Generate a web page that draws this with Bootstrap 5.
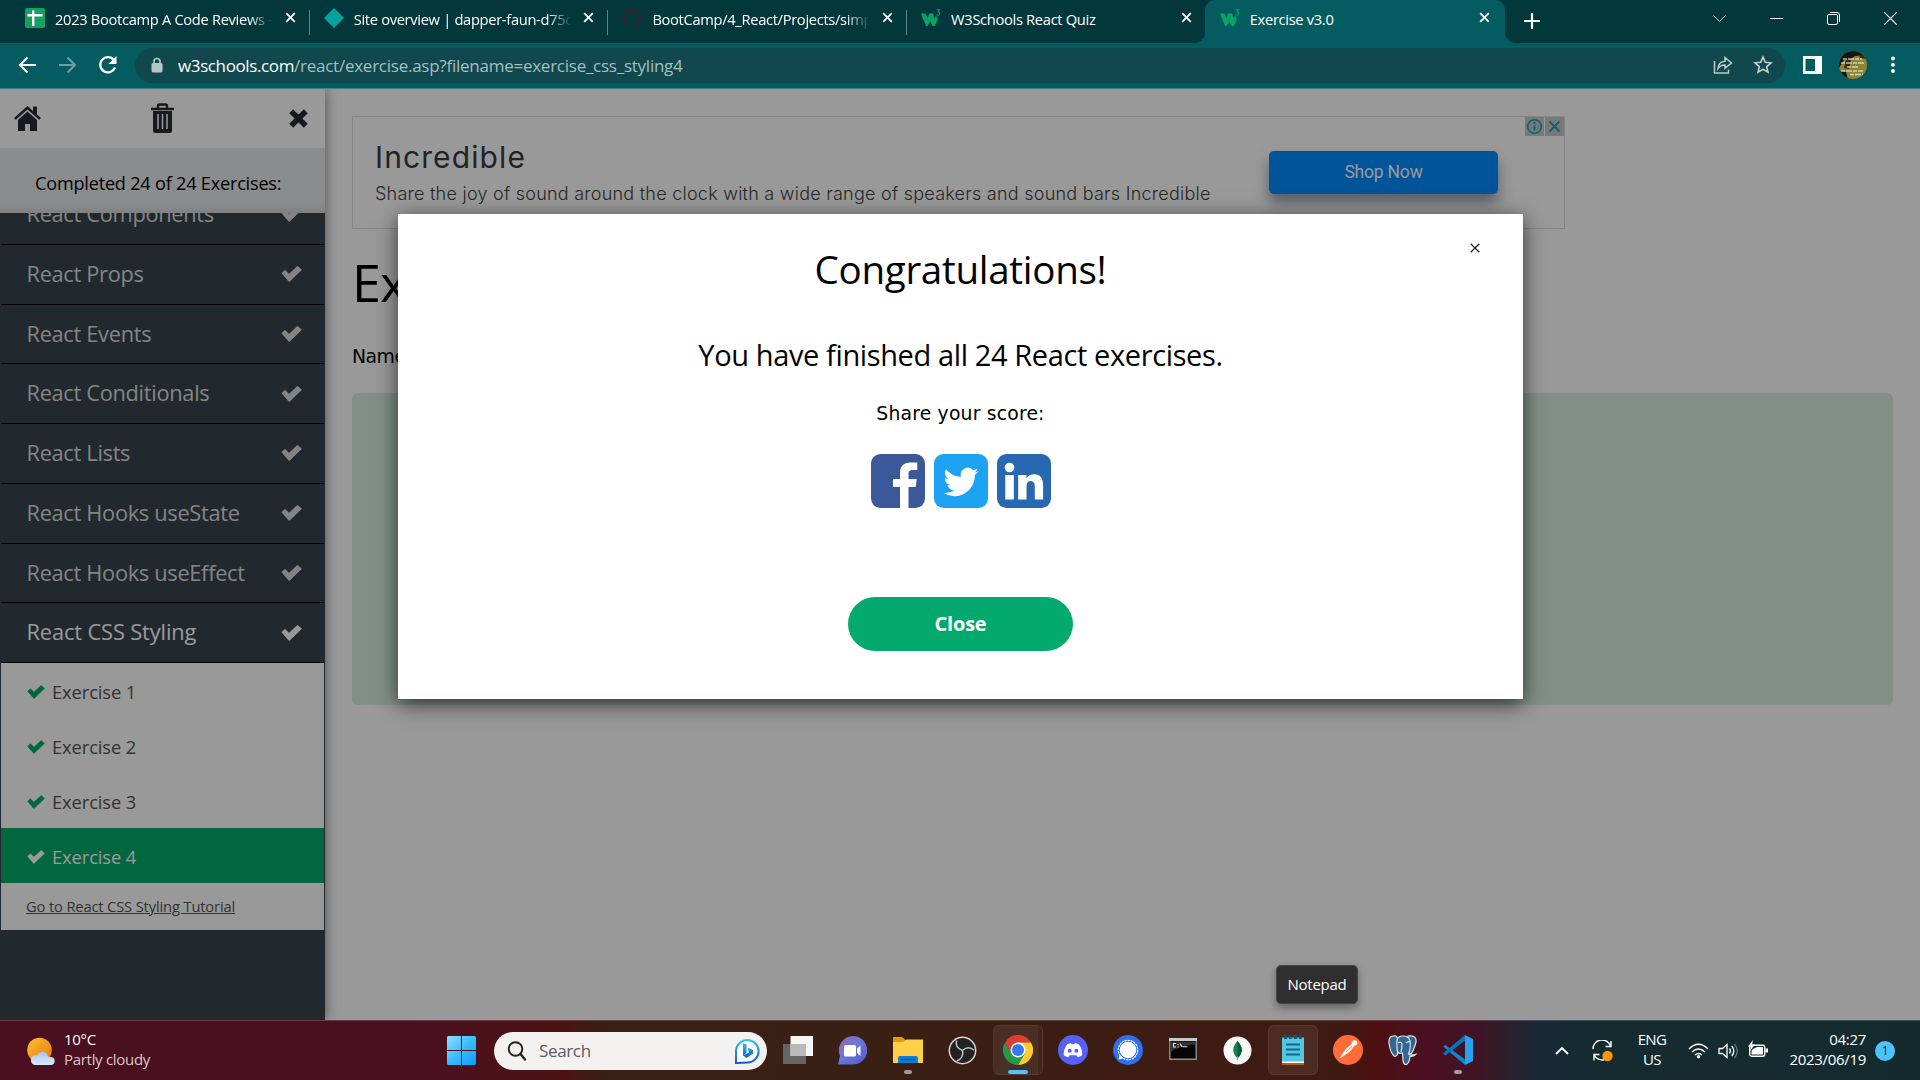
<!DOCTYPE html>
<html lang="en">
<head>
<meta charset="utf-8">
<meta name="viewport" content="width=device-width, initial-scale=1">
<title>Exercise v3.0</title>
<link href="https://cdn.jsdelivr.net/npm/bootstrap@5.3.0/dist/css/bootstrap.min.css" rel="stylesheet">
<style>
body{width:1920px;height:1080px;overflow:hidden;font-family:"Open Sans","Noto Sans",sans-serif;color:#000}
svg{display:block;flex:none}
/* browser tabs */
.tabstrip{height:43px;background:#02383c;color:#fff;font-size:14.700px}
.tab-item{width:298.7px;padding:0 13px 8px 15px;position:relative}
.tab-item+.tab-item:not(.is-active)::before{content:"";position:absolute;left:0;top:10px;height:25px;width:1px;background:#5f8386}
.tab-label{width:220px;margin-left:10px;overflow:hidden;white-space:nowrap;letter-spacing:-.32px;line-height:24px;padding-top:2px}
.tab-fade{-webkit-mask-image:linear-gradient(90deg,#000 88%,transparent 99%);mask-image:linear-gradient(90deg,#000 88%,transparent 99%)}
.is-active{background:#055c60;border-radius:10px 10px 0 0;width:300px;padding-right:15px}
.is-active::before,.is-active::after{content:"";position:absolute;bottom:0;width:10px;height:10px}
.is-active::before{left:-10px;background:radial-gradient(circle at 0 0,transparent 9.5px,#055c60 10px)}
.is-active::after{right:-10px;background:radial-gradient(circle at 100% 0,transparent 9.5px,#055c60 10px)}
.win-buttons{padding-right:23px;padding-bottom:6px}
/* toolbar */
.toolbar{height:46px;background:#055c60;border-bottom:1px solid #3e8083;padding:0 23px 1px 17px}
.omnibox{height:35px;background:#10484d;border-radius:18px;margin-left:18px;padding:0 12px 0 15px;font-size:17px;color:#a5bfc1}
.url{letter-spacing:-.25px;margin-left:14px;line-height:24px;padding-top:1px}
.url b{font-weight:400;color:#fff;letter-spacing:-.38px}
/* page */
.page{height:931px;position:relative;overflow:hidden}
.sidebar{width:325px;background:#38444e;box-shadow:0 0 12px rgba(0,0,0,.5);z-index:1}
.side-tools{height:59px;background:#fff;color:#282a35;padding:0 16px 1px 14px}
.side-status{height:65px;background:#e7e9eb;font-size:18.1px;letter-spacing:-.2px;padding:21px 0 0 35px;line-height:29px;box-shadow:inset 0 -12px 10px -10px rgba(0,0,0,.13);white-space:nowrap}
.side-list{margin:0 1px;overflow:hidden;flex:1}
.topic{height:59.75px;border-bottom:1px solid #000;color:#ddd;font-size:21.8px;letter-spacing:-.31px;padding:1px 22px 1px 25.500px}
.topic.first-cut{margin-top:-28px}
.topic.opened{color:#fff;letter-spacing:-.12px}
.exer{height:55px;background:#fff;color:#555;font-size:18.3px;letter-spacing:-.08px;padding:2px 0 0 26px;gap:7px}
.exer svg{color:#04aa6d}
.exer.done-now{background:#04aa6d;color:#fff}
.exer.done-now svg{color:#fff}
.tut{height:47px;background:#fff;padding:11px 0 0 25px;font-size:14.700px;letter-spacing:-.14px;line-height:24px}
.tut a{color:#555}
.content-area{padding:27px 27px 0}
.ad-box{width:1213px;height:113px;border:1px solid #dedede;padding-left:22px;position:relative}
.ad-title{font:400 30px/36px Inter,sans-serif;letter-spacing:1.1px;color:#3a3b40;margin-bottom:7px}
.ad-sub{font:300 18px/24px Inter,sans-serif;letter-spacing:.245px;color:#444}
.ad-btn{width:229px;height:43px;margin:0 66px 0 0;background:#008cff;color:#fff;border-radius:5px;font:400 17.5px/42px Roboto,sans-serif;box-shadow:0 9px 14px rgba(40,60,90,.5);letter-spacing:-.2px}
.ad-choices{position:absolute;right:0;top:0;gap:1px}
.ad-choices span{width:19px;height:19px;background:#c8c8c8;display:grid;place-items:center}
.ex-title{font-size:52px;font-weight:400;line-height:60px;margin:23px 0 0;letter-spacing:-1px}
.ex-text{font:18.75px/28px "DejaVu Sans",sans-serif;margin:31px 0 22px;letter-spacing:-.45px}
.answer{height:312px;background:#d9eee1;border-radius:6px}
.dim{position:absolute;inset:0;background:rgba(0,0,0,.4);z-index:5;padding:125px 397px 0 398px}
.dialog-box{height:485px;background:#fff;box-shadow:0 5px 20px rgba(0,0,0,.65);position:relative}
.dialog-x{position:absolute;right:43px;top:29px}
.dlg-h{font-size:38.600px;font-weight:400;letter-spacing:-.3px;line-height:54px;margin:0;padding-top:28px}
.dlg-p{font-size:29px;font-weight:400;letter-spacing:-.38px;line-height:40px;margin:39px 0 0}
.dlg-s{font:18.75px/26px "DejaVu Sans",sans-serif;letter-spacing:.2px;margin:26px 0 0}
.share-row{gap:9px;margin-top:27px}
.dlg-close{width:225px;height:54px;margin-top:89px;border-radius:27px;background:#04aa6d;color:#fff;font-size:20px;font-weight:700;letter-spacing:-.2px;line-height:50px;padding:0;border:0}
.dlg-close:hover{background:#04aa6d;color:#fff}
.hint{position:absolute;left:1276px;top:876px;width:82px;height:39px;background:#2f2f2f;border:1px solid #454545;border-radius:5px;color:#fff;font-size:15px;line-height:36px;z-index:6;box-shadow:0 4px 8px rgba(0,0,0,.35);letter-spacing:-.25px}
/* taskbar */
.taskbar{height:60px;border-top:1px solid rgba(255,255,255,.17);color:#fff;font-size:15px;line-height:20px;letter-spacing:-.3px;background:linear-gradient(90deg,#4a1020 0,#4a1020 420px,#4d1213 560px,#3a2016 605px,#3a1f14 900px,#3f1a12 1340px,#4c1011 1375px,#4a1023 1430px,#3d1524 1480px,#182a38 1540px,#152b30 1600px,#142b2e 1920px)}
.two-line{padding-bottom:4px}
.weather{width:447px;padding-left:27px;gap:9px}
.weather .sky{color:#dcc5ca}
.seek{width:273px;height:38px;border-radius:19px;background:#f4f2f0;margin-left:18px;padding:0 7px 0 13px;color:#5c5c5c;font-size:17px;letter-spacing:-.35px}
.tk{width:55px;height:60px;position:relative;display:grid;place-items:center;padding-bottom:1px}
.tk.run::after{content:"";position:absolute;bottom:7px;width:8px;height:4px;border-radius:2px;background:#a39a97}
.tk.cur::after{width:20px;background:#4cc2ff}
.tk.cur::before,.tk.hov::before{content:"";position:absolute;left:5px;top:4px;width:45px;height:50px;border-radius:6px;background:rgba(255,255,255,.07);border:1px solid rgba(255,255,255,.07)}
.tk.cur::before{left:3px;width:50px;background:linear-gradient(90deg,rgba(255,255,255,.08) 43px,rgba(255,255,255,.15) 43px,rgba(255,255,255,.03) 44px)}
.tk.hov::before{left:3px;width:50px}
.tk svg{position:relative}
.note-count{width:20px;height:20px;border-radius:50%;background:#4cc2ff;color:#10222c;font-size:12px;line-height:19px;margin:0 25px 0 9px}
</style>
</head>
<body class="d-flex flex-column">

<svg width="0" height="0" class="position-absolute">
  <symbol id="tick" viewBox="0 0 21 16"><path d="M1.2 7.2 4 4.6 8 8.6 16.5 .8 20 3.7 8.1 15.2z" fill="currentColor" stroke="currentColor" stroke-width="1.2" stroke-linejoin="round"/></symbol>
  <symbol id="cross" viewBox="0 0 12 12"><path d="M1.3 1.3 10.7 10.7M10.7 1.3 1.3 10.7" stroke="currentColor" stroke-width="1.9"/></symbol>
  <symbol id="w3" viewBox="0 0 20 20"><path d="M0 5.500h4.500l2 5 1.800-5h3.700l1.500 5 1.700-3 1.600 4-3 6.500h-2.300l-2.200-5-2.500 5H5z" fill="#04a567"/><path d="M15.800 1.800h2.700l-1.400 2c2.500.2 1.800 3.700-.2 3.400-.6 0-1-.3-1.300-.7" fill="none" stroke="#04a567" stroke-width="1.100"/></symbol>
</svg>

<div class="tabstrip d-flex">
  <div class="d-flex" style="padding-left:10px">
    <div class="tab-item d-flex align-items-center">
      <svg width="20" height="20"><rect width="20" height="20" rx="2" fill="#13a162"/><path d="M8.200 2.500v15.500M2.500 7.200h15" stroke="#fff" stroke-width="2.400"/></svg>
      <span class="tab-label tab-fade">2023 Bootcamp A Code Reviews -</span>
      <svg class="ms-auto" width="11" height="11"><use href="#cross"/></svg>
    </div>
    <div class="tab-item d-flex align-items-center">
      <svg width="20" height="20"><path d="M10 0 20 10 10 20 0 10z" fill="#04a39e"/></svg>
      <span class="tab-label tab-fade">Site overview | dapper-faun-d75c</span>
      <svg class="ms-auto" width="11" height="11"><use href="#cross"/></svg>
    </div>
    <div class="tab-item d-flex align-items-center">
      <svg width="20" height="20" viewBox="0 0 16 16"><path fill="#24292f" d="M8 0C3.580 0 0 3.580 0 8c0 3.540 2.290 6.530 5.470 7.590.4.070.55-.17.55-.38v-1.490c-2.010.37-2.530-.49-2.690-.94-.09-.23-.48-.94-.82-1.130-.28-.15-.68-.52-.01-.53.63-.01 1.080.58 1.230.82.720 1.210 1.870.87 2.330.66.070-.52.280-.87.510-1.070-1.780-.2-3.640-.89-3.640-3.950 0-.87.31-1.590.82-2.150-.08-.2-.36-1.020.08-2.120 0 0 .67-.21 2.200.82a7.600 7.600 0 0 1 4 0c1.530-1.040 2.200-.82 2.200-.82.440 1.100.160 1.920.080 2.120.510.560.820 1.270.820 2.150 0 3.070-1.870 3.750-3.650 3.950.290.250.540.730.540 1.480v2.200c0 .210.150.460.550.380A8 8 0 0 0 16 8c0-4.420-3.580-8-8-8"/></svg>
      <span class="tab-label tab-fade">BootCamp/4_React/Projects/simp</span>
      <svg class="ms-auto" width="11" height="11"><use href="#cross"/></svg>
    </div>
    <div class="tab-item d-flex align-items-center">
      <svg width="20" height="20"><use href="#w3"/></svg>
      <span class="tab-label">W3Schools React Quiz</span>
      <svg class="ms-auto" width="11" height="11"><use href="#cross"/></svg>
    </div>
    <div class="tab-item is-active d-flex align-items-center">
      <svg width="20" height="20"><use href="#w3"/></svg>
      <span class="tab-label">Exercise v3.0</span>
      <svg class="ms-auto" width="11" height="11"><use href="#cross"/></svg>
    </div>
  </div>
  <svg class="ms-3 mt-1 align-self-start" width="24" height="34"><path d="M3 17h16M11 9v16" stroke="#fff" stroke-width="2.200"/></svg>
  <div class="win-buttons d-flex align-items-center ms-auto" style="gap:44px">
    <svg width="13" height="13"><path d="M.5 3.500 6.500 9.500 12.500 3.500" fill="none" stroke="#c5d3d4"/></svg>
    <svg width="13" height="13"><path d="M0 6.500h13" stroke="#fff"/></svg>
    <svg width="13" height="13"><rect x=".5" y="2.500" width="10" height="10" rx="1.500" fill="none" stroke="#fff"/><path d="M3 .5h7q2.500 0 2.500 2.500v7" fill="none" stroke="#fff"/></svg>
    <svg width="13" height="13"><path d="M.3.3 12.700 12.700M12.700.3.3 12.700" stroke="#fff" stroke-width="1.100"/></svg>
  </div>
</div>

<div class="toolbar d-flex align-items-center">
  <svg width="20" height="20"><path d="M19 10H3.500M10.500 2.500 3 10l7.500 7.500" fill="none" stroke="#fff" stroke-width="2"/></svg>
  <svg style="margin-left:21px" width="20" height="20"><path d="M1 10h15.500M9.500 2.500 17 10l-7.500 7.500" fill="none" stroke="#6d9fa2" stroke-width="2"/></svg>
  <svg style="margin-left:20px" width="19" height="20"><path d="M15.800 5A7.600 7.600 0 1 0 17 12.500" fill="none" stroke="#fff" stroke-width="2.200"/><path d="M18.500 1v8h-8z" fill="#fff"/></svg>
  <div class="omnibox d-flex align-items-center flex-grow-1">
    <svg width="14" height="17" viewBox="0 0 14 17"><path d="M4 7V4.500a3 3 0 0 1 6 0V7" fill="none" stroke="#b6c5c7" stroke-width="1.700"/><rect x="1.500" y="6" width="11" height="9.500" rx="1.500" fill="#b6c5c7"/></svg>
    <span class="url"><b>w3schools.com</b>/react/exercise.asp?filename=exercise_css_styling4</span>
    <svg class="ms-auto" width="20" height="18" fill="none" stroke="#b9c8ca" stroke-width="1.500"><path d="M1.500 5v12h14v-3.500M5 12.500C5.300 8 7.500 5.500 12 5.200V1.500L18.500 7 12 12.200V9C9 8.800 6.700 10 5 12.500z"/></svg>
    <svg style="margin-left:20px" width="20" height="20"><path d="M10 2l2.300 5.300 5.700.5-4.300 3.800 1.300 5.600-5-3-5 3 1.300-5.600L2 7.800l5.700-.5z" fill="none" stroke="#c3cfd0" stroke-width="1.600"/></svg>
  </div>
  <svg style="margin-left:18px" width="19" height="18"><path d="M0 0h19v18H0zM2.500 3v12H12V3z" fill="#fff" fill-rule="evenodd"/></svg>
  <svg style="margin-left:17px" width="28" height="28"><defs><clipPath id="av"><circle cx="14" cy="14" r="14"/></clipPath></defs><g clip-path="url(#av)"><path fill="#8f8434" d="M0 0h28v28H0z"/><path d="M0 0h28v4l-12 1-4 3-7 1-5 8zM0 20l7 1 2 7H0z" fill="#15160f"/><path d="M20 4l8-1v5l-7-1zM7 8l5 1-2 9-5-1z" fill="#3b2a18"/><path d="M4 8h19M2 12h23M8 16h12M2 20h22M11 23.500h13" stroke="#e6ebdf" stroke-width="1.400" stroke-dasharray="4 1 6 1" opacity=".75"/></g></svg>
  <svg style="margin-left:22px" width="8" height="20" fill="#fff"><circle cx="4" cy="3.500" r="2"/><circle cx="4" cy="9.800" r="2"/><circle cx="4" cy="16" r="2"/></svg>
</div>

<div class="page d-flex">
  <aside class="sidebar d-flex flex-column">
    <div class="side-tools d-flex align-items-center justify-content-between">
      <svg width="27" height="27" viewBox="0 0 27 27" fill="currentColor"><path d="M13.500 1 0 13l1.800 1.800L13.500 4.500l11.700 10.300L27 13l-4-3.600V1.500h-4v4.400z"/><path d="M13.500 6.500 4 15v11h7v-7h5v7h7V15z"/></svg>
      <svg width="23" height="31" viewBox="0 0 23 31" style="margin-right:4px"><path d="M7 5.500V3q0-1.500 1.500-1.500h6Q16 1.500 16 3v2.500M0 6h23" stroke="currentColor" stroke-width="2.400" fill="none"/><path d="M2 8h19v19.500q0 2.500-2.500 2.500h-14Q2 30 2 27.500z" fill="currentColor"/><path d="M7 11v15M11.500 11v15M16 11v15" stroke="#fff" stroke-width="1.500"/></svg>
      <svg width="21" height="21"><path d="M3.200 3.200 17.800 17.800M17.800 3.200 3.200 17.800" stroke="currentColor" stroke-width="5.500" stroke-linejoin="round"/></svg>
    </div>
    <div class="side-status">Completed 24 of 24 Exercises:</div>
    <div class="side-list">
      <div class="topic first-cut d-flex align-items-center justify-content-between">React Components<svg width="21" height="16"><use href="#tick"/></svg></div>
      <div class="topic d-flex align-items-center justify-content-between">React Props<svg width="21" height="16"><use href="#tick"/></svg></div>
      <div class="topic d-flex align-items-center justify-content-between">React Events<svg width="21" height="16"><use href="#tick"/></svg></div>
      <div class="topic d-flex align-items-center justify-content-between">React Conditionals<svg width="21" height="16"><use href="#tick"/></svg></div>
      <div class="topic d-flex align-items-center justify-content-between">React Lists<svg width="21" height="16"><use href="#tick"/></svg></div>
      <div class="topic d-flex align-items-center justify-content-between">React Hooks useState<svg width="21" height="16"><use href="#tick"/></svg></div>
      <div class="topic d-flex align-items-center justify-content-between">React Hooks useEffect<svg width="21" height="16"><use href="#tick"/></svg></div>
      <div class="topic opened d-flex align-items-center justify-content-between">React CSS Styling<svg width="21" height="16"><use href="#tick"/></svg></div>
      <div class="exer d-flex align-items-center"><svg width="18" height="14"><use href="#tick"/></svg>Exercise 1</div>
      <div class="exer d-flex align-items-center"><svg width="18" height="14"><use href="#tick"/></svg>Exercise 2</div>
      <div class="exer d-flex align-items-center"><svg width="18" height="14"><use href="#tick"/></svg>Exercise 3</div>
      <div class="exer done-now d-flex align-items-center"><svg width="18" height="14"><use href="#tick"/></svg>Exercise 4</div>
      <div class="tut"><a href="#">Go to React CSS Styling Tutorial</a></div>
    </div>
  </aside>

  <main class="content-area flex-grow-1">
    <div class="ad-box d-flex justify-content-between align-items-center">
      <div>
        <div class="ad-title">Incredible</div>
        <div class="ad-sub text-nowrap">Share the joy of sound around the clock with a wide range of speakers and sound bars Incredible</div>
      </div>
      <div class="ad-btn text-center">Shop Now</div>
      <div class="ad-choices d-flex">
        <span><svg width="17" height="17"><circle cx="8.500" cy="8.500" r="6.800" fill="none" stroke="#00aecd" stroke-width="1.600"/><path d="M8.500 7.500v5M8.500 4v2" stroke="#00aecd" stroke-width="2"/></svg></span>
        <span><svg width="13" height="13"><path d="M1.500 1.500 11.500 11.500M11.500 1.500 1.500 11.500" stroke="#00aecd" stroke-width="1.900"/></svg></span>
      </div>
    </div>
    <h1 class="ex-title">Exercise:</h1>
    <p class="ex-text">Name</p>
    <div class="answer"></div>
  </main>

  <div class="dim">
    <div class="dialog-box text-center">
      <svg class="dialog-x" width="10" height="10"><path d="M.7.700 9.300 9.300M9.300.700.700 9.300" stroke="#222" stroke-width="1.300"/></svg>
      <h2 class="dlg-h">Congratulations!</h2>
      <p class="dlg-p">You have finished all 24 React exercises.</p>
      <p class="dlg-s">Share your score:</p>
      <div class="share-row d-flex justify-content-center">
        <svg width="54" height="54"><rect width="54" height="54" rx="9.500" fill="#3b5998"/><path d="M29 54V33h-7v-8h7v-6c0-7 4-10.500 10-10.500h7.300V16H42c-3.500 0-4.500 1.300-4.500 4v5h8.200l-1 8h-7.200v21z" fill="#fff"/></svg>
        <svg width="54" height="54"><rect width="54" height="54" rx="9.500" fill="#1da1f2"/><path transform="translate(9.500 10.500) scale(1.460)" d="M24 4.600a9.800 9.800 0 0 1-2.800.8 4.900 4.900 0 0 0 2.200-2.700 9.900 9.900 0 0 1-3.100 1.200 4.900 4.900 0 0 0-8.400 4.500A14 14 0 0 1 1.700 3.200a4.900 4.900 0 0 0 1.500 6.600 4.900 4.900 0 0 1-2.200-.6 4.900 4.900 0 0 0 3.900 4.900 5 5 0 0 1-2.200.1 4.900 4.900 0 0 0 4.600 3.400A9.900 9.900 0 0 1 0 19.500a14 14 0 0 0 21.500-12.400A10 10 0 0 0 24 4.600z" fill="#fff"/></svg>
        <svg width="54" height="54"><rect width="54" height="54" rx="9.500" fill="#2867b2"/><g fill="#fff"><circle cx="12.500" cy="13.500" r="4.800"/><path d="M8.300 21h8.500v24.500H8.300zM21.200 21h8.200v3.200c1.800-2.500 4.400-4 8-4 6 0 8.700 4.300 8.700 10.500v14.800h-8.300V32.500c0-3.400-1.300-5.500-4-5.500-2.900 0-4.300 2-4.300 5.500v13h-8.300z"/></g></svg>
      </div>
      <button class="btn dlg-close">Close</button>
    </div>
  </div>
  <div class="hint text-center">Notepad</div>
</div>

<div class="taskbar d-flex align-items-center">
  <div class="weather d-flex align-items-center">
    <svg width="28" height="28"><defs><linearGradient id="sun" x1="0" y1="0" x2="1" y2="1"><stop stop-color="#fbc12f"/><stop offset="1" stop-color="#ee7410"/></linearGradient><linearGradient id="cl" x1="0" y1="0" x2="0" y2="1"><stop stop-color="#a9c5f5"/><stop offset="1" stop-color="#dbe8fc"/></linearGradient></defs><circle cx="12.500" cy="13" r="12.300" fill="url(#sun)"/><path d="M7.500 28a5 5 0 0 1-.2-9.500q1.700-.7 3 0a5.500 5.500 0 0 1 10.600 1.200q6.800-.6 6.800 4.300Q27.500 28 23.500 28z" fill="url(#cl)"/></svg>
    <div class="two-line">10°C<br><span class="sky">Partly cloudy</span></div>
  </div>
  <svg width="29" height="29"><defs><linearGradient id="wn" x1="0" y1="0" x2="1" y2="1"><stop stop-color="#8be3ff"/><stop offset=".5" stop-color="#3cbcfb"/><stop offset="1" stop-color="#0a9bff"/></linearGradient></defs><path d="M1 0h13v14H0V1zM15 0h13l1 1v13H15zM0 15h14v14H1l-1-1zM15 15h14v13l-1 1H15z" fill="url(#wn)"/></svg>
  <div class="seek d-flex align-items-center">
    <svg width="20" height="20"><circle cx="8.500" cy="8" r="6.800" fill="none" stroke="#222" stroke-width="1.900"/><path d="M13.500 13l4.500 5.500" stroke="#222" stroke-width="2.400" stroke-linecap="round"/></svg>
    <span style="margin-left:12px">Search</span>
    <svg class="ms-auto" width="26" height="26"><defs><linearGradient id="bg1" x1="0" y1="0" x2="0" y2="1"><stop stop-color="#25c8f0"/><stop offset="1" stop-color="#1c56c8"/></linearGradient></defs><path d="M2 25V13A11.300 11.300 0 1 1 13.500 24.500z" fill="#fff" stroke="url(#bg1)" stroke-width="2"/><path d="M9 5l3.500 1.200v8.500l-3.500 3zM13.500 9.500l5.500 2.600v3.400L12.500 20 9 17.500l6-3z" fill="url(#bg1)"/></svg>
  </div>
  <div class="d-flex" style="margin-left:3px">
    <div class="tk"><svg width="30" height="28"><path d="M0 8h23v20H0z" fill="#646464"/><path d="M7.500 0H30v20H7.500z" fill="#f5f5f5"/><path d="M7.500 8H23v12H7.500z" fill="#b9b9b9"/></svg></div>
    <div class="tk"><svg width="29" height="29"><defs><linearGradient id="tm" x1="0" y1="0" x2="1" y2="1"><stop stop-color="#9a62b5"/><stop offset=".45" stop-color="#6c78d8"/><stop offset="1" stop-color="#5558c9"/></linearGradient></defs><path d="M0 28.500 2 20A14.200 14.200 0 1 1 14.500 28.500z" fill="url(#tm)"/><rect x="6" y="9" width="12" height="11.500" rx="1.500" fill="#fff"/><path d="M19 12.500 22.500 9.500v10.500L19 17z" fill="#fff"/></svg></div>
    <div class="tk run"><svg width="30" height="28"><path d="M0 1h9l3.500 3H30v9H0z" fill="#e09b08"/><path d="M0 6h10l3-2.500h17V27H0z" fill="#ffcf48"/><path d="M5 27v-5q0-2 2-2h16q2 0 2 2v5z" fill="#0c7fd2"/><path d="M8 23.500h14" stroke="#074d94" stroke-width="1.300"/></svg></div>
    <div class="tk"><svg width="29" height="29"><circle cx="14.500" cy="14.500" r="13.200" fill="#222226" stroke="#d8d5d2" stroke-width="1.500"/><g fill="none" stroke="#c6c3c1" stroke-width="1.500"><path id="arm" d="M14.500 14.500Q7 12 8.500 4.500"/><path d="M14.500 14.500Q7 12 8.500 4.500" transform="rotate(120 14.500 14.500)"/><path d="M14.500 14.500Q7 12 8.500 4.500" transform="rotate(240 14.500 14.500)"/></g></svg></div>
    <div class="tk cur run"><svg width="30" height="30" viewBox="0 0 30 30"><path d="M2 7.500A15 15 0 0 1 28 7.500H15L8.500 18.700z" fill="#e33b2e"/><path d="M28 7.500A15 15 0 0 1 15 30l6.500-11.200L15 7.500z" fill="#ffcb2f"/><path d="M2 7.500A15 15 0 0 0 15 30l6.500-11.200H8.500z" fill="#259a48"/><circle cx="15" cy="15" r="7.500" fill="#fff"/><circle cx="15" cy="15" r="6" fill="#2f7bea"/></svg></div>
    <div class="tk"><svg width="30" height="30"><circle cx="15" cy="15" r="15" fill="#5562f5"/><path d="M9 9.500q2-1.300 4-1.500l.7 1.300h2.600L17 8q2 .2 4 1.500 3.500 5 3.300 10.500-2 1.800-4.600 2.200l-1.200-1.900h-7l-1.200 1.900Q7.700 21.800 5.700 20 5.500 14.500 9 9.500z" fill="#fff"/><circle cx="11.700" cy="15.700" r="2" fill="#5562f5"/><circle cx="18.300" cy="15.700" r="2" fill="#5562f5"/></svg></div>
    <div class="tk"><svg width="30" height="30"><circle cx="15" cy="15" r="15" fill="#3070ef"/><circle cx="15" cy="15" r="8.300" fill="#fff"/><circle cx="15" cy="15" r="9.700" fill="none" stroke="#fff" stroke-width="1.200" stroke-dasharray="2.300 .7"/><path d="M5.500 24.500 6.500 20l3.500 3.500z" fill="#fff"/></svg></div>
    <div class="tk"><svg width="28" height="22" style="top:-1px"><path d="M.8.800h26.400v20.400H.8z" fill="#050505" stroke="#8d9090" stroke-width="1.400"/><path d="M0 0h28v3H0z" fill="#c2cccd"/><path d="M1.500 3.500h25v3Q8 8 1.500 14z" fill="#333"/><path d="M7 5.500H4.500v3.500H7M9 6v1M9 8.500v1M11 5.500l2 3.500M13.500 8.700h5" stroke="#ddd" stroke-width="1.100" fill="none"/></svg></div>
    <div class="tk"><svg width="29" height="29"><circle cx="14.500" cy="14.500" r="14" fill="#f9f9f7"/><path d="M14.500 5q8.500 9 0 17.500Q6 14 14.500 5z" fill="#138153"/><path d="M14.500 5q8.500 9 0 17.500z" fill="#045c3c"/><path d="M14.500 20v4" stroke="#888" stroke-width="1"/></svg></div>
    <div class="tk hov"><svg width="22" height="30"><path d="M0 2.500h22V28H0z" fill="#55c6e2"/><path d="M0 26.500h22V28H0z" fill="#fff"/><path d="M0 28h22v2H0z" fill="#b85c0c"/><path d="M4 9.500h14M4 14.500h14M4 19.500h14" stroke="#0b6a8b" stroke-width="2"/><path d="M3.500 0v4M8.500 0v4M13.500 0v4M18.500 0v4" stroke="#0d5975" stroke-width="2.800"/></svg></div>
    <div class="tk"><svg width="30" height="30"><circle cx="15" cy="15" r="15" fill="#ff6c37"/><path d="M7 23 13 14l6-5 2 2-4.500 5.500z" fill="#fff" stroke="#fff" stroke-width=".6"/><circle cx="21.500" cy="8" r="2.800" fill="#fff"/><path d="M13 17l6-5.500" stroke="#ff6c37" stroke-width=".9"/></svg></div>
    <div class="tk"><svg width="30" height="30" fill="#336791" stroke="#dfe3e6" stroke-width="1.200"><path d="M8 1Q0 0 1 8q1 9 5 13 2 1 3.500-1.500L10 4zM20 1q9-1 8 6-2 8-5 12l-3-2z"/><path d="M9 5q1-4 6-4 6 0 7 5 1 8-1.500 13 2 2 7.500.2-2 2.500-6 2.300-.5 6-3.500 8-3 .5-3.500-4l-.5-7.500q-3 1-5-1-1-6-.5-12z"/><path d="M10 8q3-2 4 1 0 4-1 8M18 8q2-2 4-1" fill="none"/></svg></div>
    <div class="tk run"><svg width="30" height="30"><path d="M0 11.500 2.500 10 22 24.500V30z" fill="#1583cd"/><path d="M0 18.500 2.500 20.500 22 5.500V0z" fill="#0b73ba"/><path d="M22 0l8 4v22l-8 4z" fill="#27a2ee"/></svg></div>
  </div>
  <div class="d-flex align-items-center ms-auto">
    <svg width="14" height="9"><path d="M1 8 7 2l6 6" fill="none" stroke="#fff" stroke-width="1.900"/></svg>
    <svg style="margin-left:23px" width="22" height="22" fill="none" stroke="#fff" stroke-width="1.400"><path d="M1 9A9 9 0 0 1 18.500 6M19 1v5.500h-5.500M12 19.800A9 9 0 0 1 2 14.500M2 20.500V14.500h5.500"/><circle cx="15.500" cy="16" r="5.200" fill="#ff9500" stroke="none"/></svg>
    <div class="two-line text-center" style="margin-left:23px;width:29px;letter-spacing:-.7px">ENG<br>US</div>
    <svg style="margin-left:22px" width="21" height="16" fill="none" stroke="#fff" stroke-width="1.500"><path d="M1 6q9.500-9.500 19 0M4 9q6.500-6 13 0M7 12q3.500-3 7 0"/><circle cx="10.500" cy="13.800" r="1.700" fill="#fff" stroke="none"/></svg>
    <svg style="margin-left:9px" width="21" height="18" fill="none" stroke="#fff" stroke-width="1.300"><path d="M1 6.500h3.500L9 2.500v13l-4.500-4H1zM11.500 6.500q2 2.500 0 5M13.800 4q4 5 0 10"/><path d="M16.500 2q5.500 7 0 14" stroke="#5d7375"/></svg>
    <svg style="margin-left:9px;margin-bottom:3px" width="20" height="18"><rect x="1.700" y="5.200" width="15" height="11" rx="2" fill="none" stroke="#fff" stroke-width="1.400"/><path d="M5 9l4-2h6v7.500H3.500V11zM17.500 8.500H20v4h-2.500zM5 0 0 6.500h3L2 11l5-6.500H4z" fill="#fff"/></svg>
    <div class="two-line text-end" style="margin-left:21px">04:27<br>2023/06/19</div>
    <div class="note-count text-center">1</div>
  </div>
</div>

<script src="https://cdn.jsdelivr.net/npm/bootstrap@5.3.0/dist/js/bootstrap.bundle.min.js"></script>
</body>
</html>
